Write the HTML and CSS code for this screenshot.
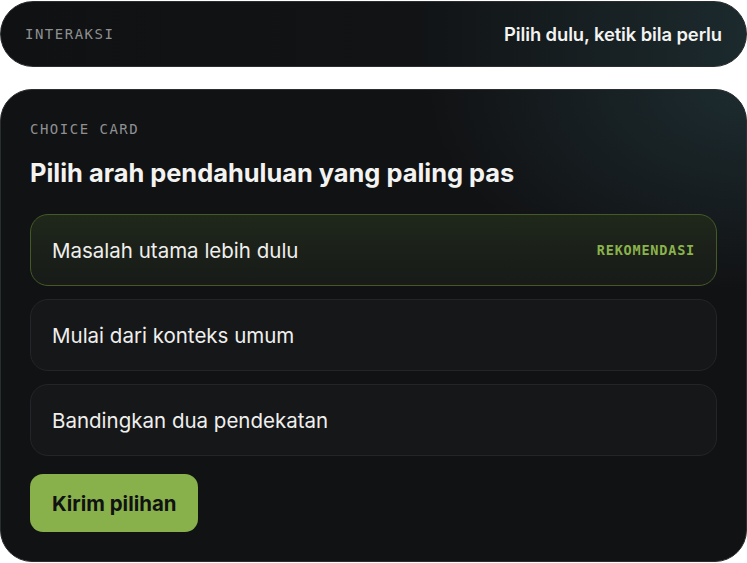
FILE: index.html
```html
<!DOCTYPE html>
<html lang="id">
<head>
<meta charset="utf-8">
<title>Choice Card</title>
<link rel="stylesheet" href="styles.css">
</head>
<body>
<div class="page">
  <header class="topbar">
    <span class="eyebrow">INTERAKSI</span>
    <span class="topbar-title">Pilih dulu, ketik bila perlu</span>
  </header>

  <section class="card">
    <div class="eyebrow">CHOICE CARD</div>
    <h1 class="card-title">Pilih arah pendahuluan yang paling pas</h1>

    <div class="options">
      <div class="option is-selected">
        <span class="option-text">Masalah utama lebih dulu</span>
        <span class="badge">REKOMENDASI</span>
      </div>
      <div class="option">
        <span class="option-text">Mulai dari konteks umum</span>
      </div>
      <div class="option">
        <span class="option-text">Bandingkan dua pendekatan</span>
      </div>
    </div>

    <div class="actions">
      <button class="btn-primary" type="button">Kirim pilihan</button>
    </div>
  </section>
</div>
</body>
</html>
```

FILE: styles.css
```css
* {
  box-sizing: border-box;
}

html, body {
  margin: 0;
  background: #ffffff;
}

body {
  font-family: Inter, "Noto Sans", sans-serif;
  color: #f1f1ef;
}

.page {
  display: flex;
  flex-direction: column;
  gap: 22px;
  padding-top: 1px;
  width: 747px;
}

.eyebrow {
  font-family: "DejaVu Sans Mono", "Liberation Mono", monospace;
  font-size: 14px;
  line-height: 18px;
  letter-spacing: 1.5px;
  color: #8e9092;
}

/* top pill */
.topbar {
  height: 66px;
  border: 1px solid #2b2e31;
  border-radius: 33px;
  background: linear-gradient(90deg, #101113 0%, #111315 55%, #1c2a2d 100%);
  display: flex;
  align-items: center;
  justify-content: space-between;
  padding: 0 24px 0 24px;
}

.topbar-title {
  font-size: 18.4px;
  font-weight: 600;
  color: #f3f3f1;
  letter-spacing: -0.1px;
}

/* main card */
.card {
  height: 473px;
  border: 1px solid #2b2e31;
  border-radius: 32px;
  background:
    radial-gradient(ellipse 320px 200px at 100% 0%, rgba(38, 64, 70, 0.55), rgba(38, 64, 70, 0) 100%),
    #111214;
  padding: 30px 29px 29px 29px;
  display: flex;
  flex-direction: column;
}

.card-title {
  margin: 20px 0 26px;
  font-size: 25.4px;
  line-height: 30px;
  font-weight: 700;
  letter-spacing: 0;
  color: #f3f3f1;
}

.options {
  display: flex;
  flex-direction: column;
  gap: 13px;
}

.option {
  height: 72px;
  border: 1px solid #232528;
  border-radius: 18px;
  background: #161719;
  display: flex;
  align-items: center;
  justify-content: space-between;
  padding: 0 21px;
}

.option.is-selected {
  border-color: #435a27;
  background: linear-gradient(180deg, #1f281b 0%, #1a1f19 60%, #181b18 100%);
}

.option-text {
  font-size: 20.5px;
  font-weight: 400;
  color: #efefed;
}

.badge {
  font-family: "DejaVu Sans Mono", "Liberation Mono", monospace;
  font-size: 13.5px;
  font-weight: 700;
  letter-spacing: 0.8px;
  color: #8ab34b;
}

.actions {
  margin-top: 18px;
  display: flex;
}

.btn-primary {
  height: 58px;
  padding: 0 22px;
  border: 0;
  border-radius: 13px;
  background: #88b04b;
  color: #111213;
  font-family: Inter, "Noto Sans", sans-serif;
  font-size: 20.4px;
  font-weight: 700;
  cursor: pointer;
}
```
